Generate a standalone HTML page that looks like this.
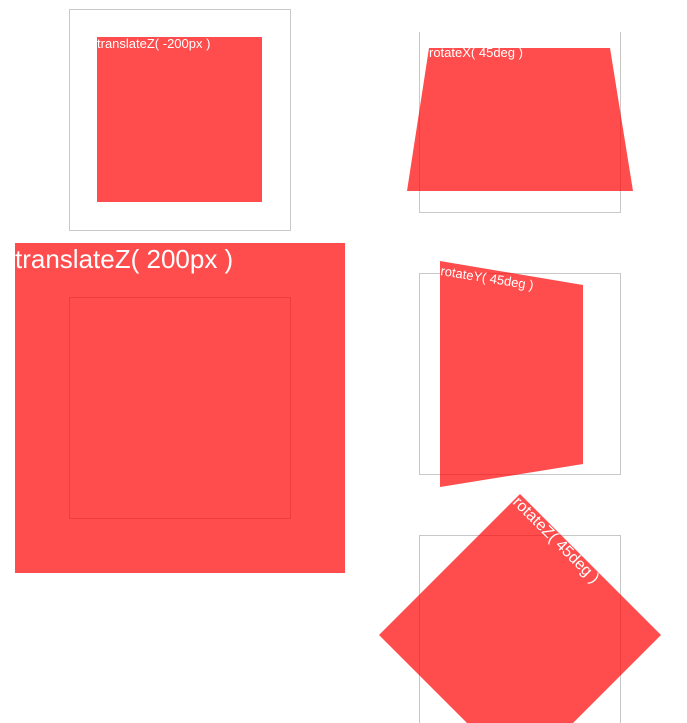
<!DOCTYPE html>
<html><head><meta charset="utf-8"><style>
html,body{margin:0;padding:0;background:#fff;width:687px;height:723px;overflow:hidden}
svg{display:block;font-family:"Liberation Sans",Arial,sans-serif;overflow:hidden}
</style></head><body>
<svg width="687" height="723" viewBox="0 0 687 723">
<g fill="none" stroke="#c8c8c8" stroke-width="1">
<rect x="69.5" y="9.5" width="221" height="221"/>
<path d="M419.5 32 V212.5 H620.5 V32"/>
<rect x="419.5" y="273.5" width="201" height="201"/>
<path d="M419.5 723 V535.5 H620.5 V723"/>
<rect x="69.5" y="297.5" width="221" height="221"/>
</g>
<g fill="rgba(255,0,0,0.7)">
<rect x="97" y="37" width="165" height="165"/>
<rect x="15" y="243" width="330" height="330"/>
<polygon points="429,48 610,48 633,191 407,191"/>
<polygon points="440,261 583,285 583,464 440,487"/>
<polygon points="520,494 661,635 573,723 467,723 379,635"/>
</g>
<g fill="#fff">
<text x="97" y="48" font-size="13">translateZ( -200px )</text>
<text x="15" y="268" font-size="26">translateZ( 200px )</text>
<text x="429" y="57" font-size="13">rotateX( 45deg )</text>
<text x="440" y="275" font-size="13" transform="rotate(9 440 275)">rotateY( 45deg )</text>
<text x="0" y="0" font-size="16" transform="translate(512,503) rotate(45)">rotateZ( 45deg )</text>
</g>
</svg>
</body></html>
